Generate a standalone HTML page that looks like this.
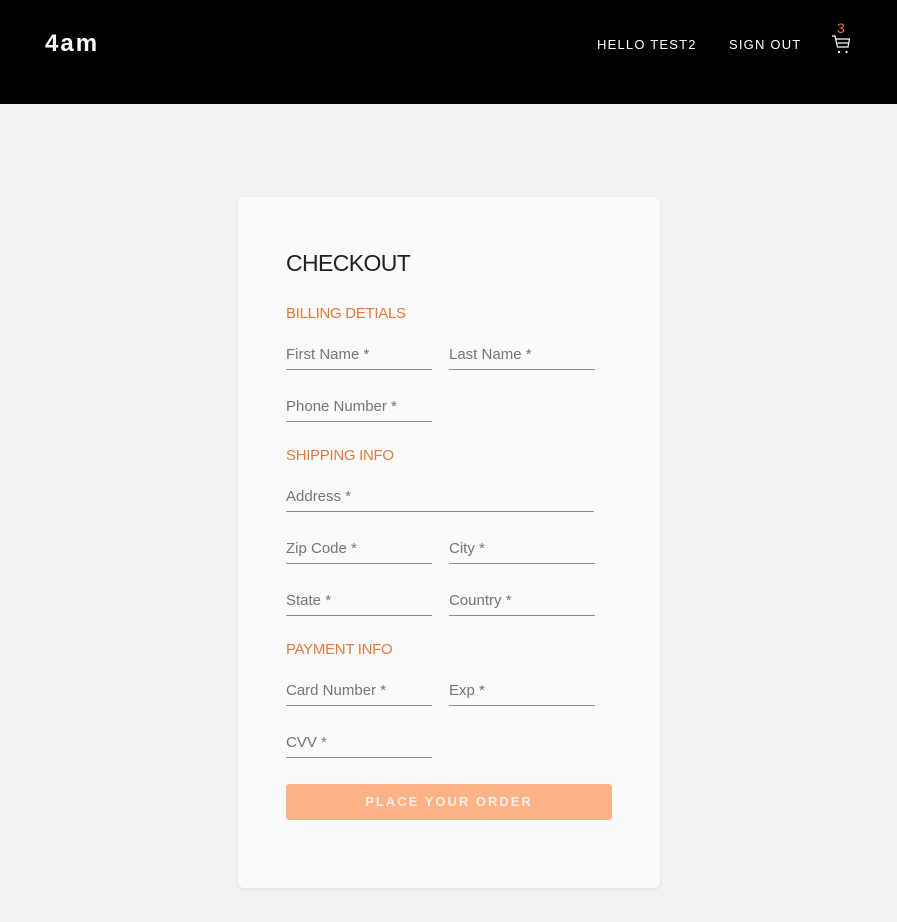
<!DOCTYPE html>
<html><head><meta charset="utf-8"><style>
*{margin:0;padding:0;box-sizing:border-box}
body{width:897px;height:922px;background:#f2f2f2;font-family:"Liberation Sans",sans-serif;position:relative;overflow:hidden}
.hdr{position:absolute;left:0;top:0;width:897px;height:104px;background:#000}
.a{position:absolute;white-space:nowrap}
.logo{left:45px;top:30px;font-size:24px;font-weight:bold;color:#fff;letter-spacing:2px;line-height:28px}
.nav{top:37px;font-size:13px;color:#fff;letter-spacing:1.2px;line-height:15px}
.card{position:absolute;left:238px;top:197px;width:422px;height:691px;background:#fafafa;border-radius:6px;box-shadow:0 1px 4px rgba(0,0,0,0.08)}
.h1{left:286px;top:250px;font-size:23px;color:#222;line-height:26px;letter-spacing:-0.6px}
.sec{font-size:15px;color:#e07a40;line-height:18px;left:286px;letter-spacing:-0.3px}
.f{position:absolute;height:26px;border-bottom:1px solid #8c8c8c;font-size:15px;color:#757575;line-height:18px;padding-top:2px;white-space:nowrap}
.btn{position:absolute;left:286px;top:784px;width:326px;height:36px;background:#fbb286;border-radius:3px;color:#f6eee8;font-weight:bold;font-size:13px;letter-spacing:2px;text-align:center;line-height:36px}
</style></head><body>
<div class="hdr"></div>
<div class="a logo">4am</div>
<div class="a nav" style="left:597px">HELLO TEST2</div>
<div class="a nav" style="left:729px">SIGN OUT</div>
<div class="a" style="left:837px;top:21px;font-size:14px;color:#e07a40;line-height:14px">3</div>
<svg class="a" style="left:830px;top:33px" width="22" height="22" viewBox="0 0 22 22" fill="none" stroke="#fff" stroke-width="1.2">
<path d="M2 3h3l2.5 11h10.5l1.5-8H6"/><path d="M7.5 10h11"/><circle cx="9" cy="19" r="1.1" fill="#fff" stroke="none"/><circle cx="16.5" cy="19" r="1.1" fill="#fff" stroke="none"/></svg>
<div class="card"></div>
<div class="a h1">CHECKOUT</div>
<div class="a sec" style="top:305px">BILLING DETIALS</div>
<div class="f" style="left:286px;top:344px;width:146px">First Name *</div>
<div class="f" style="left:449px;top:344px;width:146px">Last Name *</div>
<div class="f" style="left:286px;top:396px;width:146px">Phone Number *</div>
<div class="a sec" style="top:447px">SHIPPING INFO</div>
<div class="f" style="left:286px;top:486px;width:308px">Address *</div>
<div class="f" style="left:286px;top:538px;width:146px">Zip Code *</div>
<div class="f" style="left:449px;top:538px;width:146px">City *</div>
<div class="f" style="left:286px;top:590px;width:146px">State *</div>
<div class="f" style="left:449px;top:590px;width:146px">Country *</div>
<div class="a sec" style="top:641px">PAYMENT INFO</div>
<div class="f" style="left:286px;top:680px;width:146px">Card Number *</div>
<div class="f" style="left:449px;top:680px;width:146px">Exp *</div>
<div class="f" style="left:286px;top:732px;width:146px">CVV *</div>
<div class="btn">PLACE YOUR ORDER</div>
</body></html>
